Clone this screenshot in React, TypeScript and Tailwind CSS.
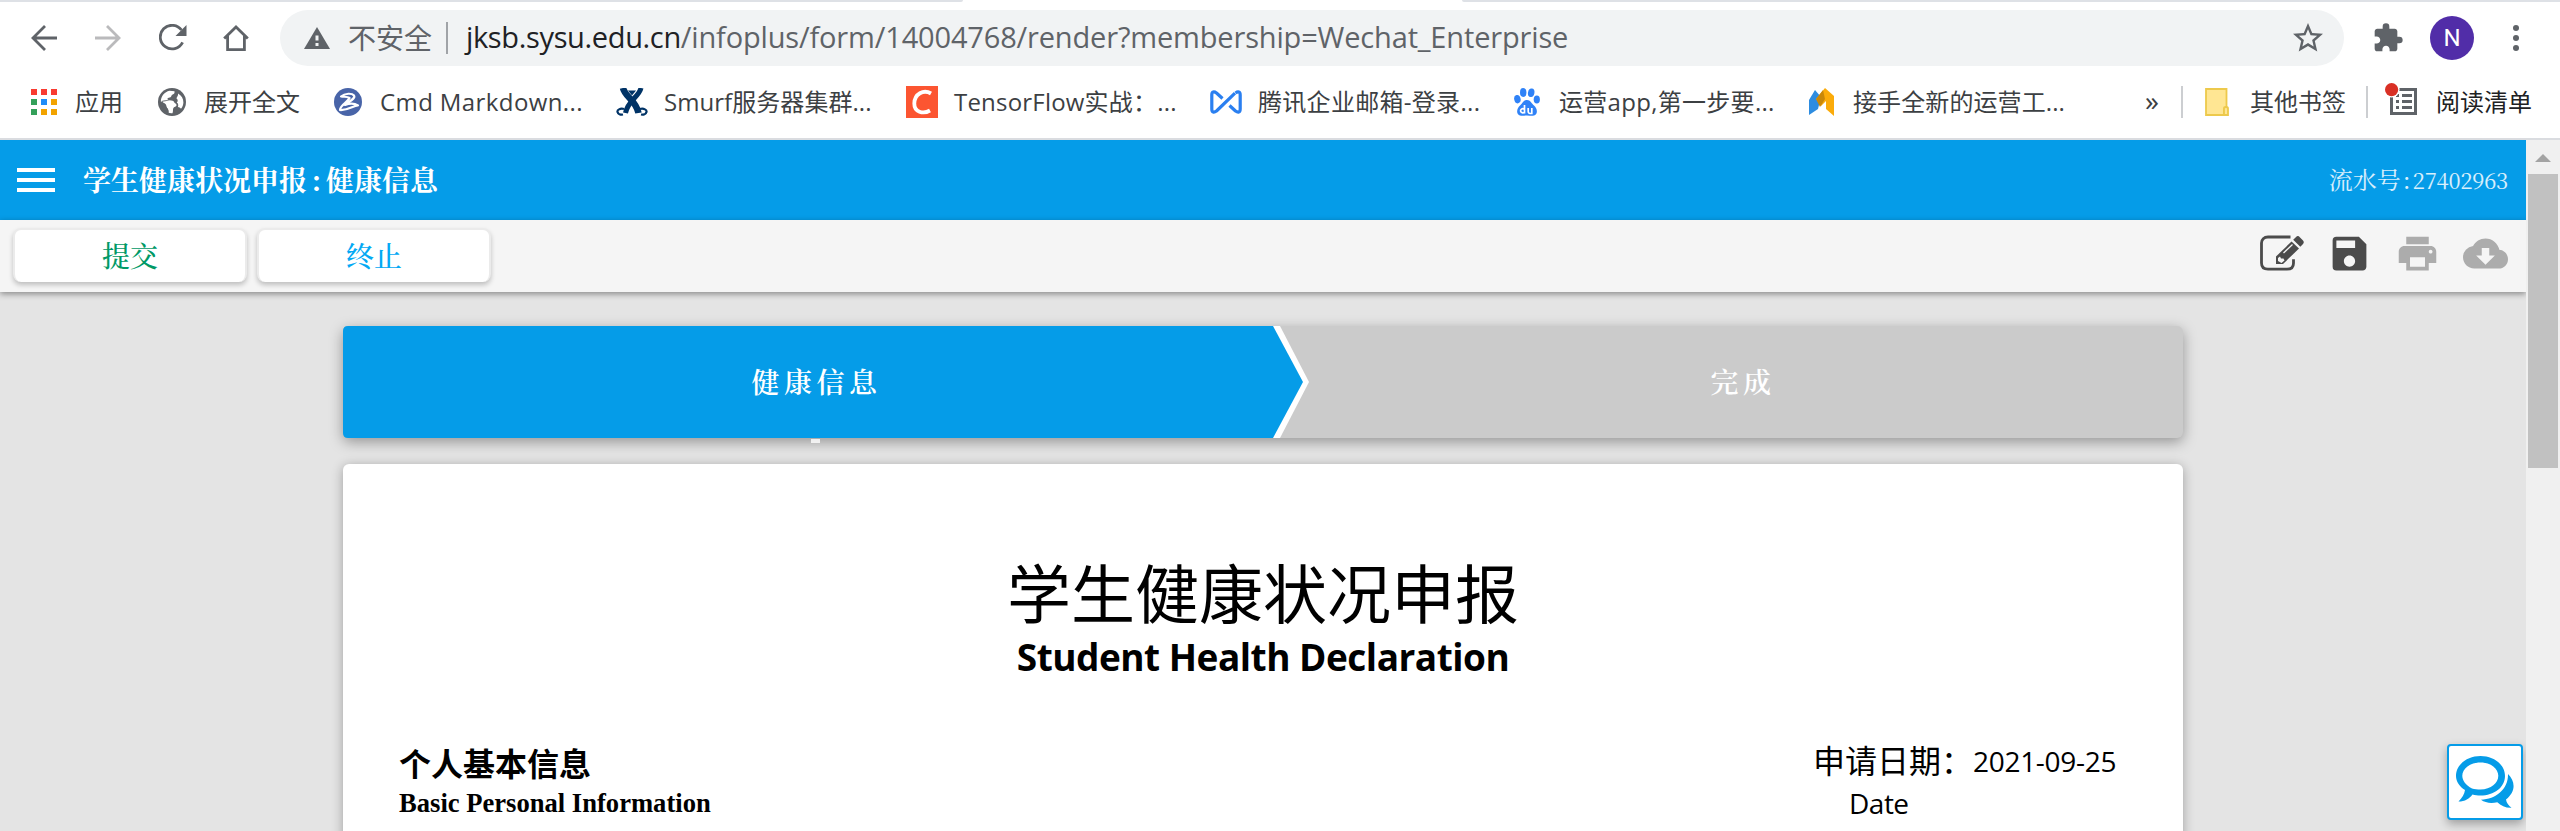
import type { ReactNode } from "react";
import { MdSave, MdPrint, MdCloudDownload, MdExtension, MdStarBorder } from "react-icons/md";

const SERIF = "font-['Noto_Serif_CJK_SC','Source_Han_Serif_SC','Noto_Sans_CJK_SC',serif]";

function BackIcon({ className }: { className: string }) {
  return (
    <svg viewBox="0 0 26 26" className={className} fill="none" stroke="currentColor" strokeWidth="2.8">
      <path d="M26 13H2M14 1 2 13l12 12" />
    </svg>
  );
}

function ReloadIcon() {
  return (
    <svg viewBox="0 0 28 28" className="h-7 w-7" fill="none">
      <path d="M23.6 18.4A11.8 11.8 0 1 1 22.5 6" stroke="#5f6368" strokeWidth="2.8" />
      <path d="M27.5 1v11h-11z" fill="#5f6368" />
    </svg>
  );
}

function HomeIcon() {
  return (
    <svg viewBox="0 0 26 28" className="h-7 w-[26px]" fill="none" stroke="#5f6368" strokeWidth="2.8">
      <path d="M1.2 14.6 13 3l11.8 11.6M4.6 12v13.6h16.8V12" />
    </svg>
  );
}

function WarningIcon() {
  return (
    <svg viewBox="0 0 26 22" className="h-[22px] w-[26px]">
      <path d="M13 0 26 22H0z" fill="#5f6368" />
      <path d="M11.5 8.5h3v5h-3zM11.5 16h3v3h-3z" fill="#f1f3f4" />
    </svg>
  );
}

function AppsIcon() {
  const colors = ["#f83b30", "#f83b30", "#f83b30", "#34a05a", "#1e8cf8", "#f2a300", "#34a05a", "#f2a300", "#f2a300"];
  return (
    <svg viewBox="0 0 26 26" className="h-[26px] w-[26px]">
      {colors.map((c, i) => (
        <rect key={i} x={(i % 3) * 10} y={Math.floor(i / 3) * 10} width="6" height="6" fill={c} />
      ))}
    </svg>
  );
}

function GlobeIcon() {
  return (
    <svg viewBox="0 0 28 28" className="h-7 w-7">
      <circle cx="14" cy="14" r="14" fill="#5f6368" />
      <path d="M2.800 13.500C3 8 6.500 4 11.500 2.800l5 .4c.3 1.800-.4 2.800-1.800 3.200-1.500.4-1 2-2.200 2.800-1 .7-2.500.4-3 1.400-.4 1.200.8 1.500 2 1.600 2.500.2 4.200.2 4.700 2 .3 1.300 2.300 1 2.300 2.800 0 1.900-2.500 1.800-3.200 3.200-.6 1.300 0 3-.8 5-1.500.2-3 0-4-.4.5-2-.2-3.300-1.200-4.500-1.200-1.300-.6-3-1.800-4.200-1.200-1.200-3-1.600-4.700-2.600z" fill="#fff" />
      <path d="M12 12.500c-2.500-.3-6-.5-8.500.5l3 3c1.500 1.500 2 4 3.500 5l.5 4c-2-.5-5-3-6-5.500L2 14z" fill="#5f6368" />
      <path d="M20 5.500c3.500 2 5.500 5 5.400 9-.1 2.500-1 4.700-2.400 6.300-.8-1.300-2-1.600-3-1.800.5-2 .3-3.500-1.200-4.500 1.500-1.500 1-3-.3-4 .2-1.800 2-2.500 1.500-5z" fill="#fff" />
    </svg>
  );
}

function CmdIcon() {
  return (
    <svg viewBox="0 0 28 28" className="h-[30px] w-7">
      <circle cx="14" cy="14" r="14" fill="#4864a8" />
      <path d="M7 8.500c4-3.500 11-3.500 13-1 2 3-5 6-9 9.500 5-2 10-1.500 13 .5-5 0-9 5-18 4.500 0-5 8-8 9.500-12-2-1.500-5-1-8.500-1.500z" fill="none" stroke="#fff" strokeWidth="2.200" strokeLinejoin="round" />
    </svg>
  );
}

function SmurfIcon() {
  return (
    <svg viewBox="0 0 32 28" className="h-7 w-8" fill="none" stroke="#003366">
      <path d="M7 0c2 9 13 12 15.500 25" strokeWidth="6.500" />
      <path d="M25 0c-2 9-13 12-15.500 25" strokeWidth="5" />
      <path d="M12 2.500h8L16 7.500z" fill="#003366" stroke="none" />
      <path d="M8 21c-4-1-7 1-6.500 3 .5 2 3 3 5.500 2.500M24 21c4-1 7 1 6.500 3-.5 2-3 3-5.500 2.500" strokeWidth="2.200" />
    </svg>
  );
}

function CIcon() {
  return (
    <svg viewBox="0 0 32 32" className="h-8 w-8">
      <rect width="32" height="32" fill="#fc5531" />
      <path d="M25 7.500C17.500 3 8.500 8 8.300 17.500 8.200 26 17 28.500 24 24.500" fill="none" stroke="#fff" strokeWidth="3.800" />
    </svg>
  );
}

function TencentIcon() {
  return (
    <svg viewBox="0 0 32 24" className="h-6 w-8" fill="none" stroke="#2a7ff0" strokeWidth="3.200" strokeLinejoin="round">
      <path d="M12.500 8.500 6.500 3C4 1.200 1.800 1.500 1.800 5v14c0 3.500 2.200 3.800 4.700 2L25 3.200" />
      <path d="m19.500 15.500 6 5.500c2.500 1.800 4.700 1.500 4.700-2V5c0-3.500-2.200-3.800-4.700-2" />
    </svg>
  );
}

function BaiduIcon() {
  return (
    <svg viewBox="0 0 26 28" className="h-7 w-[26px]" fill="#2f82f7">
      <ellipse cx="9.200" cy="4.500" rx="3.200" ry="4.400" />
      <ellipse cx="17.200" cy="4.700" rx="3.200" ry="4.300" transform="rotate(10 17.200 4.700)" />
      <ellipse cx="3.400" cy="11.200" rx="3.200" ry="4.200" transform="rotate(-12 3.400 11.200)" />
      <ellipse cx="22.800" cy="11.500" rx="3.100" ry="4" />
      <path d="M13 12c3.500 0 4.500 3.500 7 5.500 3.500 3 4.500 9.500-1 10.300-2 .3-4-.4-6-.4s-4 .7-6 .4c-5.500-.8-4.500-7.300-1-10.300 2.500-2 3.500-5.500 7-5.500z" />
      <path d="M10.500 17v8.500M10.500 21.500a2.200 2 0 1 0 0 2.500M14.200 20v3.500c0 1.800 1 2 3.600 2V20" stroke="#fff" strokeWidth="1.700" fill="none" />
    </svg>
  );
}

function MIcon() {
  return (
    <svg viewBox="0 0 26 28" className="h-7 w-[26px]">
      <path d="M0 27V12L6 2l6 7-3 12z" fill="#2d8ce0" />
      <path d="M7 11 16 0l9 8v20l-8-7v-8l-5 5z" fill="#fbab0a" />
      <path d="m7 11 7-9 2 9-5 8z" fill="#c98708" />
    </svg>
  );
}

function FolderIcon() {
  return (
    <svg viewBox="0 0 26 28" className="h-7 w-[26px]" fill="#ffe693" stroke="#edc94c" strokeWidth="1.800">
      <path d="M1 1h20.500v17.500L19 21v6H1z" />
      <path d="M19 27v-6.500c0-2 4-2 4 0V27z" />
    </svg>
  );
}

function ReadingListIcon() {
  return (
    <svg viewBox="0 0 33 34" className="h-[34px] w-[33px]">
      <path d="M6.500 6.500h24v24h-24z" fill="#fff" stroke="#5f6368" strokeWidth="3" />
      <path d="M11 12.500h3m3 0h10M11 18.500h3m3 0h10M11 24.500h3m3 0h10" stroke="#5f6368" strokeWidth="3" />
      <circle cx="6.600" cy="6.600" r="8" fill="#fff" />
      <circle cx="6.600" cy="6.600" r="6.600" fill="#d93025" />
    </svg>
  );
}

function EditIcon() {
  return (
    <svg viewBox="0 0 44 36" className="h-9 w-11">
      <path d="M30.500 2H8C4 2 1.500 4.500 1.500 8v20c0 4 2.500 6.200 6.500 6.200h19c4.500 0 6.500-2 6.500-6v-4" fill="none" stroke="#4b4b4b" strokeWidth="2.800" />
      <path d="M16 21.500 31.500 6.500 39 13.500 23 29h-7z" fill="#4b4b4b" />
      <path d="m33.200 4.800 2.600-2.600c1.500-1.500 2.800-1.500 4 0l3 3c1.400 1.400 1.200 2.600 0 4l-2.500 2.500z" fill="#4b4b4b" />
      <path d="M23.500 18 32.500 9.500" stroke="#f5f5f5" strokeWidth="1.300" />
      <path d="m18 23 2-1.500 1 2h2.500l1 2-3 2.500-3.500-2z" fill="#f5f5f5" />
    </svg>
  );
}

function ChatIcon() {
  return (
    <svg viewBox="0 0 58 52" className="h-[52px] w-[58px]">
      <path
        fillRule="evenodd"
        d="M24.500 0C38 0 49 8.600 49 20S38 39.500 24.500 39.500c-3 0-5.500-.2-8-1C13.500 42.500 9 45.600 2.500 45.600c3.500-3.500 6-7.500 6.500-11.500C3.500 30.500 0 25.500 0 20 0 8.600 11 0 24.500 0zm0 6.500C14 6.500 6.300 12.500 6.300 19.800c0 4.700 3.500 9.500 9.700 12.700 2.500.7 5.500 1 8.500 1 10.500 0 17.800-6.400 17.800-13.700S35 6.500 24.500 6.500z"
        fill="#059ce8"
      />
      <path d="M52 18c7.500 7.500 8 17.500-2 25.500.5 3.500 2.500 6 5.500 8.300-5.500.3-10.500-1.800-14.200-5.500-6.300 1.200-12 .7-16.300-2.500C40 43.500 52.500 33 52 18z" fill="#059ce8" />
    </svg>
  );
}

interface BookmarkProps {
  width: string;
  iconWidth: string;
  icon: ReactNode;
  label: string;
  labelClass?: string;
}

function Bookmark({ width, iconWidth, icon, label, labelClass = "" }: BookmarkProps) {
  return (
    <a className={`flex shrink-0 items-center ${width}`}>
      <span className={`flex shrink-0 items-center ${iconWidth}`}>{icon}</span>
      <span className={`whitespace-nowrap ${labelClass}`}>{label}</span>
    </a>
  );
}

function BrowserChrome() {
  return (
    <header className="flex h-[140px] flex-col border-b-2 border-[#dadce0] bg-white">
      <div className="flex h-[2px] justify-between">
        <span className="w-[963px] rounded-br bg-[#dee1e6]" />
        <span className="w-[1098px] rounded-bl bg-[#dee1e6]" />
      </div>
      <div className="flex h-[72px] items-center pl-[31px]">
        <BackIcon className="h-[26px] w-[26px] text-[#5f6368]" />
        <BackIcon className="ml-[38px] h-[26px] w-[26px] rotate-180 text-[#bababc]" />
        <span className="ml-[38px]"><ReloadIcon /></span>
        <span className="ml-9"><HomeIcon /></span>
        <div className="ml-[31px] flex h-14 w-[2064px] items-center rounded-full bg-[#f1f3f4] pl-6 text-[28px]">
          <WarningIcon />
          <span className="ml-[18px] w-[98px] shrink-0 text-[#5f6368]">不安全</span>
          <span className="h-8 w-[2px] bg-[#a0a3a7]" />
          <span className="ml-[18px] flex-1 whitespace-nowrap pb-0.5 text-[29px] tracking-[-0.16px] text-[#5f6368]">
            <span className="tracking-[-0.35px] text-[#202124]">jksb.sysu.edu.cn</span>/infoplus/form/14004768/render?membership=Wechat_Enterprise
          </span>
          <MdStarBorder className="mr-[18px] h-9 w-9 text-[#5f6368]" />
        </div>
        <MdExtension className="ml-[28px] h-8 w-8 text-[#5f6368]" />
        <span className="ml-[26px] flex h-11 w-11 items-center justify-center rounded-full bg-[#512da8] font-['Roboto'] text-2xl text-white">N</span>
        <span className="ml-[39px] flex flex-col gap-[4px]">
          <i className="h-1.5 w-1.5 rounded-full bg-[#5f6368]" />
          <i className="h-1.5 w-1.5 rounded-full bg-[#5f6368]" />
          <i className="h-1.5 w-1.5 rounded-full bg-[#5f6368]" />
        </span>
      </div>
      <nav className="flex h-14 items-center pl-[31px] text-2xl text-[#3c4043]">
        <Bookmark width="w-[127px]" iconWidth="w-[44px]" icon={<AppsIcon />} label="应用" />
        <Bookmark width="w-[176px]" iconWidth="w-[46px]" icon={<GlobeIcon />} label="展开全文" />
        <Bookmark width="w-[282px]" iconWidth="w-[46px]" icon={<CmdIcon />} label="Cmd Markdown..." labelClass="tracking-[0.4px]" />
        <Bookmark width="w-[290px]" iconWidth="w-[48px]" icon={<SmurfIcon />} label="Smurf服务器集群..." labelClass="tracking-[0.05px]" />
        <Bookmark width="w-[304px]" iconWidth="w-[48px]" icon={<CIcon />} label="TensorFlow实战：..." labelClass="tracking-[0.2px]" />
        <Bookmark width="w-[304px]" iconWidth="w-[48px]" icon={<TencentIcon />} label="腾讯企业邮箱-登录..." labelClass="tracking-[0.3px]" />
        <Bookmark width="w-[295px]" iconWidth="w-[45px]" icon={<BaiduIcon />} label="运营app,第一步要..." labelClass="tracking-[0.3px]" />
        <Bookmark width="w-[336px]" iconWidth="w-[44px]" icon={<MIcon />} label="接手全新的运营工..." labelClass="tracking-[0.1px]" />
        <span className="w-[36px] shrink-0 pb-1 text-[28px] leading-8">»</span>
        <span className="h-8 w-[2px] bg-[#ccced1]" />
        <span className="w-[22px]" />
        <Bookmark width="w-[161px]" iconWidth="w-[45px]" icon={<FolderIcon />} label="其他书签" />
        <span className="h-8 w-[2px] bg-[#ccced1]" />
        <span className="w-[17px]" />
        <Bookmark width="w-[160px]" iconWidth="w-[51px]" icon={<span className="-mt-1"><ReadingListIcon /></span>} label="阅读清单" labelClass="text-[#202124]" />
      </nav>
    </header>
  );
}

function AppBar() {
  return (
    <div className={`flex h-20 items-center justify-between bg-[#059ce8] pb-0.5 pl-[17px] pr-[18px] text-white ${SERIF}`}>
      <div className="flex items-center">
        <span className="mt-0.5 flex w-[38px] flex-col gap-1.5">
          <i className="h-1 bg-white" />
          <i className="h-1 bg-white" />
          <i className="h-1 bg-white" />
        </span>
        <h1 className="ml-[28px] text-[28px] font-bold">学生健康状况申报<span className="inline-block w-[19px] text-center">:</span>健康信息</h1>
      </div>
      <span className="text-2xl text-white/85">流水号<span className="inline-block w-3 text-center">:</span><span className="inline-block text-right text-[22px] tracking-[-0.2px]">27402963</span></span>
    </div>
  );
}

function Toolbar() {
  const button = "flex h-[54px] w-[234px] items-center justify-center rounded-lg border-2 border-b-0 border-[#ebebeb] bg-white pb-0.5 text-[28px] font-medium shadow-[0_3px_5px_rgba(0,0,0,0.22)]";
  return (
    <div className={`relative flex h-[72px] items-start justify-between bg-[#f5f5f5] pl-[13px] pr-[18px] pt-2 shadow-[0_2px_6px_rgba(0,0,0,0.4)] ${SERIF}`}>
      <div className="flex gap-[10px]">
        <button className={`${button} text-[#009966]`}>提交</button>
        <button className={`${button} text-[#03a9f4]`}>终止</button>
      </div>
      <div className="flex h-[50px] items-center text-[#acacac]">
        <EditIcon />
        <MdSave className="ml-[23px] h-[45px] w-[45px] text-[#4b4b4b]" />
        <MdPrint className="ml-[23px] h-[45px] w-[45px]" />
        <MdCloudDownload className="ml-[23px] h-[45px] w-[45px]" />
      </div>
    </div>
  );
}

function Steps() {
  return (
    <div className={`relative flex h-28 overflow-visible rounded-md bg-[#cbcbcb] text-[28px] font-semibold tracking-[4.500px] text-white shadow-[0_4px_14px_rgba(0,0,0,0.35)] ${SERIF}`}>
      <svg viewBox="0 0 966 112" className="absolute left-0 top-0 h-28 w-[966px]">
        <path d="M900 0h37l29 56-29 56h-37z" fill="#fff" />
        <path d="M5 0h925l30 56-30 56H5q-5 0-5-5V5q0-5 5-5z" fill="#059ce8" />
      </svg>
      <span className="relative flex w-[947px] items-center justify-center pb-0.5">健康信息</span>
      <span className="flex flex-1 items-center justify-center pb-0.5 pl-[13px]">完成</span>
      <span className="absolute -bottom-[5px] left-[468px] h-1 w-[9px] bg-white/80" />
    </div>
  );
}

function FormCard() {
  return (
    <section className="mt-[26px] h-[420px] rounded-md bg-white px-14 text-black shadow-[0_2px_12px_rgba(0,0,0,0.3)]">
      <h2 className="flex flex-col items-center">
        <span className="mt-[95px] h-[70px] text-[64px] leading-[70px]">学生健康状况申报</span>
        <span className="mt-[3px] h-[50px] whitespace-nowrap text-[37px] font-bold leading-[50px] tracking-[-0.5px]">Student Health Declaration</span>
      </h2>
      <div className="mt-[64px] flex justify-between">
        <div>
          <p className="h-[36px] text-[32px] font-bold leading-[36px]">个人基本信息</p>
          <p className="mt-[7px] h-[28px] whitespace-nowrap font-['Liberation_Serif',serif] text-[26.6px] font-bold leading-[28px]">Basic Personal Information</p>
        </div>
        <div className="-mt-[3px] w-[314px]">
          <p className="flex h-[36px] items-center whitespace-nowrap text-[32px] leading-[36px]">
            <span className="w-[160px]">申请日期：</span>
            <span className="text-[28px] tracking-[-0.3px]">2021-09-25</span>
          </p>
          <p className="mt-[7px] pl-[36px] text-[28px] leading-[34px] tracking-[-0.5px]">Date</p>
        </div>
      </div>
    </section>
  );
}

function Scrollbar() {
  return (
    <div className="flex w-[34px] flex-col items-center bg-[#f0f0f0]">
      <svg viewBox="0 0 16 8" className="mt-[14px] h-2 w-4 shrink-0">
        <path d="M8 0l8 8H0z" fill="#a3a3a3" />
      </svg>
      <span className="mt-3 h-[294px] w-[30px] shrink-0 bg-[#c1c1c1]" />
    </div>
  );
}

export default function App() {
  return (
    <div className="h-[831px] w-[2560px] overflow-hidden bg-white font-['Open_Sans','Noto_Sans_CJK_SC',sans-serif]">
      <BrowserChrome />
      <div className="flex h-[691px]">
        <main className="relative w-[2526px] overflow-hidden bg-[#e4e4e4]">
          <AppBar />
          <Toolbar />
          <div className="ml-[343px] mt-[34px] w-[1840px]">
            <Steps />
            <FormCard />
          </div>
          <button className="absolute left-[2447px] top-[604px] flex h-[76px] w-[76px] items-center justify-center rounded border-2 border-[#059ce8] bg-white shadow-[0_4px_10px_rgba(0,0,0,0.3)]">
            <ChatIcon />
          </button>
        </main>
        <Scrollbar />
      </div>
    </div>
  );
}
